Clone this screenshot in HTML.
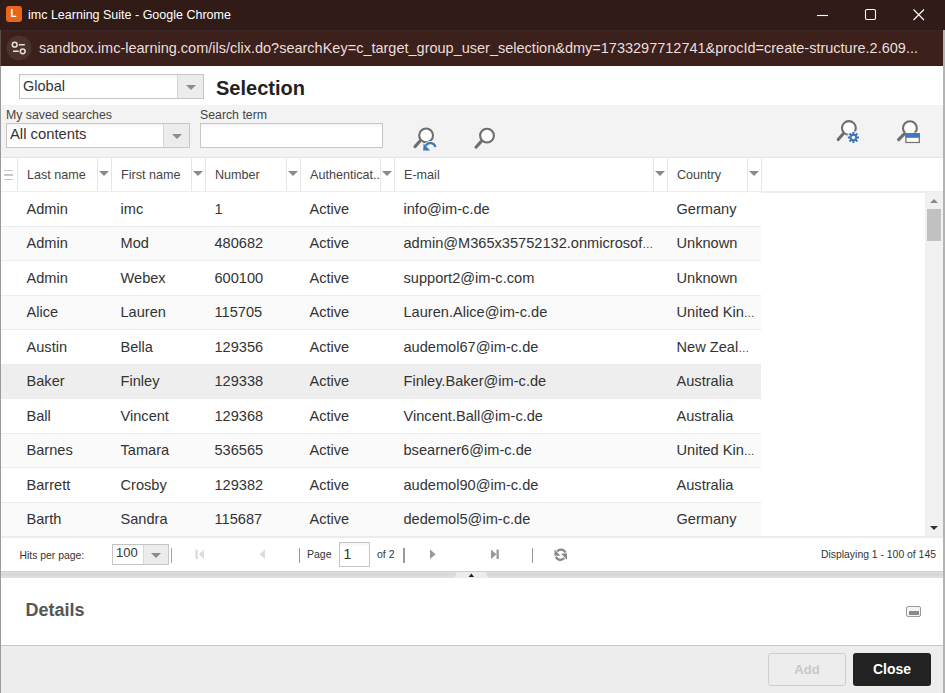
<!DOCTYPE html>
<html><head><meta charset="utf-8">
<style>
*{box-sizing:border-box;margin:0;padding:0}
html,body{width:945px;height:693px;overflow:hidden;background:#fff;font-family:"Liberation Sans",sans-serif;color:#333}
.a{position:absolute}
#title{left:0;top:0;width:945px;height:30px;background:#311b17}
#addr{left:0;top:30px;width:945px;height:36px;background:#3b201c;border-top:1.5px solid #3b2727}
#logo{left:5.5px;top:5.5px;width:16px;height:16px;border-radius:3px;background:#e8651c;color:#fff;font:bold 10px/16px "Liberation Sans",sans-serif;text-align:center}
#ttxt{left:28px;top:7px;font-size:12.5px;line-height:16px;color:#fff;white-space:nowrap}
#url{left:39px;top:39px;font-size:14.5px;line-height:18px;color:#e9dfdc;white-space:nowrap}
.t{white-space:nowrap;position:absolute}
.combo{position:absolute;border:1px solid #c6c6c6;background:linear-gradient(#f3f3f3,#fff 4px)}
.trig{position:absolute;top:0;bottom:0;right:0;border-left:1px solid #d6d6d6;background:#ececec}
.trig:after{content:"";position:absolute;left:50%;top:50%;margin-left:-5px;margin-top:-2px;border-left:5px solid transparent;border-right:5px solid transparent;border-top:5px solid #8c8c8c}
#band{left:1px;top:105px;width:942px;height:52px;background:#f3f3f3}
#hdr{left:1px;top:157px;width:942px;height:35px;background:#fff;border-top:1px solid #e4e4e4}
.hsep{position:absolute;top:158px;height:33px;width:1px;background:#e6e6e6}
.harr{position:absolute;top:171px;width:0;height:0;border-left:5px solid transparent;border-right:5px solid transparent;border-top:5px solid #8a8a8a}
.ht{position:absolute;top:166.5px;font-size:12.6px;line-height:16px;color:#444;white-space:nowrap}
.row{position:absolute;left:1px;width:760px;height:34.5px;border-bottom:1px solid #ececec}
.rt{position:absolute;font-size:14.6px;line-height:18px;color:#333;white-space:nowrap}

</style></head><body>
<div id="title" class="a"></div>
<div id="logo" class="a">L</div>
<div id="ttxt" class="a">imc Learning Suite - Google Chrome</div>
<div id="addr" class="a"></div>
<svg class="a" style="left:0;top:0" width="945" height="66" viewBox="0 0 945 66">
<path d="M817 15.5H828" stroke="#fff" stroke-width="1.1"/>
<rect x="865.5" y="9.5" width="10" height="10" rx="1.5" fill="none" stroke="#fff" stroke-width="1.1"/>
<path d="M913.5 9.5L924 20M924 9.5L913.5 20" stroke="#fff" stroke-width="1.1"/>
<circle cx="19" cy="48" r="12.5" fill="#4b322d"/>
<circle cx="14.7" cy="44.7" r="2.4" fill="none" stroke="#e9dfdc" stroke-width="1.5"/>
<path d="M18.8 44.7H24.8M13 51.3H18.7" stroke="#e9dfdc" stroke-width="1.5"/>
<circle cx="22.7" cy="51.3" r="2.4" fill="none" stroke="#e9dfdc" stroke-width="1.5"/>
</svg>
<div id="url" class="a">sandbox.imc-learning.com/ils/clix.do?searchKey=c_target_group_user_selection&amp;dmy=1733297712741&amp;procId=create-structure.2.609...</div>
<div class="a" style="left:0;top:30px;width:1px;height:36px;background:#5e4c48"></div><div class="a" style="left:0;top:66px;width:1.3px;height:627px;background:#9b9b9b"></div>
<div class="a" style="left:943px;top:30px;width:2px;height:663px;background:#b3b3b3"></div>
<div class="combo" style="left:19px;top:74px;width:185px;height:25px"><div class="trig" style="width:26px"></div></div>
<div class="t" style="left:23px;top:78px;font-size:14.5px;line-height:17px;color:#333">Global</div>
<div class="t" style="left:216px;top:76px;font-size:20px;line-height:24px;font-weight:bold;color:#222">Selection</div>
<div id="band" class="a"></div>
<div class="t" style="left:6px;top:108px;font-size:12.3px;line-height:15px;color:#444">My saved searches</div>
<div class="t" style="left:200px;top:108px;font-size:12.3px;line-height:15px;color:#444">Search term</div>
<div class="combo" style="left:6px;top:123px;width:184px;height:25px"><div class="trig" style="width:26px"></div></div>
<div class="t" style="left:10px;top:126px;font-size:14.8px;line-height:17px;color:#333">All contents</div>
<div class="combo" style="left:200px;top:123px;width:183px;height:25px"></div>
<svg class="a" style="left:0;top:105px" width="945" height="52" viewBox="0 105 945 52">
<g fill="#fff" stroke="#6e6e6e" stroke-width="2.1">
<circle cx="426.1" cy="135.4" r="6.9"/>
<circle cx="487" cy="135.6" r="6.9"/>
<circle cx="848.9" cy="128" r="6.9"/>
<circle cx="909.9" cy="128.2" r="6.9"/>
</g>
<g stroke="#6e6e6e" stroke-width="3.1" stroke-linecap="round">
<path d="M420 141L415 146.6"/>
<path d="M481 141.6L476 147.2"/>
<path d="M843 134L838.2 139.6"/>
<path d="M903.8 134.3L898.6 139.6"/>
</g>
<path d="M435.3 147.2A5 4.6 0 0 0 425.8 145.8" fill="none" stroke="#fff" stroke-width="4" opacity=".8"/><path d="M435.3 147.2A5 4.6 0 0 0 425.8 145.8" fill="none" stroke="#3d76bb" stroke-width="2.2"/>
<polygon points="423.2,150.6 423.6,143.6 430.2,150.4" fill="#3d76bb"/>
<g transform="translate(853.4 137.5)">
<circle r="6.4" fill="#fff" opacity=".85"/>
<g fill="#3d76bb">
<circle r="3.7"/>
<rect x="-1.05" y="-5.6" width="2.1" height="11.2"/>
<rect x="-1.05" y="-5.6" width="2.1" height="11.2" transform="rotate(45)"/>
<rect x="-1.05" y="-5.6" width="2.1" height="11.2" transform="rotate(90)"/>
<rect x="-1.05" y="-5.6" width="2.1" height="11.2" transform="rotate(135)"/>
</g>
<circle r="1.8" fill="#fff"/>
</g>
<rect x="905.2" y="132.5" width="14.8" height="11.2" fill="#fff" opacity=".85"/>
<rect x="905.9" y="133.7" width="13.4" height="8.8" fill="#fff" stroke="#777" stroke-width="1.3"/>
<rect x="905.3" y="133.2" width="14.6" height="4.6" fill="#4078bd"/>
</svg>
<div id="hdr" class="a"></div>
<div class="a" style="left:1px;top:191px;width:942px;height:2px;background:#ececec"></div>

<div class="hsep" style="left:17px"></div>
<div class="ht" style="left:27px">Last name</div>
<div class="hsep" style="left:97px"></div>
<div class="hsep" style="left:111px"></div>
<div class="harr" style="left:99px"></div>
<div class="ht" style="left:121px">First name</div>
<div class="hsep" style="left:191px"></div>
<div class="hsep" style="left:205px"></div>
<div class="harr" style="left:193px"></div>
<div class="ht" style="left:215px">Number</div>
<div class="hsep" style="left:286px"></div>
<div class="hsep" style="left:300px"></div>
<div class="harr" style="left:288px"></div>
<div class="ht" style="left:310px">Authenticat..</div>
<div class="hsep" style="left:380px"></div>
<div class="hsep" style="left:394px"></div>
<div class="harr" style="left:382px"></div>
<div class="ht" style="left:404px">E-mail</div>
<div class="hsep" style="left:653px"></div>
<div class="hsep" style="left:667px"></div>
<div class="harr" style="left:655px"></div>
<div class="ht" style="left:677px">Country</div>
<div class="hsep" style="left:747px"></div>
<div class="hsep" style="left:761px"></div>
<div class="harr" style="left:749px"></div>
<div class="a" style="left:4.3px;top:169.5px;width:8.5px;height:1.8px;background:#c8c8c8"></div>
<div class="a" style="left:4.3px;top:174px;width:8.5px;height:1.8px;background:#c8c8c8"></div>
<div class="a" style="left:4.3px;top:178.5px;width:8.5px;height:1.8px;background:#c8c8c8"></div>
<div class="row" style="top:192.0px;background:#fff"></div>
<div class="rt" style="left:26.5px;top:199.5px">Admin</div>
<div class="rt" style="left:120.5px;top:199.5px">imc</div>
<div class="rt" style="left:214.5px;top:199.5px">1</div>
<div class="rt" style="left:309.5px;top:199.5px">Active</div>
<div class="rt" style="left:403.5px;top:199.5px">info@im-c.de</div>
<div class="rt" style="left:676.5px;top:199.5px">Germany</div>
<div class="row" style="top:226.5px;background:#fafafa"></div>
<div class="rt" style="left:26.5px;top:234.0px">Admin</div>
<div class="rt" style="left:120.5px;top:234.0px">Mod</div>
<div class="rt" style="left:214.5px;top:234.0px">480682</div>
<div class="rt" style="left:309.5px;top:234.0px">Active</div>
<div class="rt" style="left:403.5px;top:234.0px">admin@M365x35752132.onmicrosof<span style="font-size:11px">…</span></div>
<div class="rt" style="left:676.5px;top:234.0px">Unknown</div>
<div class="row" style="top:261.0px;background:#fff"></div>
<div class="rt" style="left:26.5px;top:268.5px">Admin</div>
<div class="rt" style="left:120.5px;top:268.5px">Webex</div>
<div class="rt" style="left:214.5px;top:268.5px">600100</div>
<div class="rt" style="left:309.5px;top:268.5px">Active</div>
<div class="rt" style="left:403.5px;top:268.5px">support2@im-c.com</div>
<div class="rt" style="left:676.5px;top:268.5px">Unknown</div>
<div class="row" style="top:295.5px;background:#fafafa"></div>
<div class="rt" style="left:26.5px;top:303.0px">Alice</div>
<div class="rt" style="left:120.5px;top:303.0px">Lauren</div>
<div class="rt" style="left:214.5px;top:303.0px">115705</div>
<div class="rt" style="left:309.5px;top:303.0px">Active</div>
<div class="rt" style="left:403.5px;top:303.0px">Lauren.Alice@im-c.de</div>
<div class="rt" style="left:676.5px;top:303.0px">United Kin<span style="font-size:11px">…</span></div>
<div class="row" style="top:330.0px;background:#fff"></div>
<div class="rt" style="left:26.5px;top:337.5px">Austin</div>
<div class="rt" style="left:120.5px;top:337.5px">Bella</div>
<div class="rt" style="left:214.5px;top:337.5px">129356</div>
<div class="rt" style="left:309.5px;top:337.5px">Active</div>
<div class="rt" style="left:403.5px;top:337.5px">audemol67@im-c.de</div>
<div class="rt" style="left:676.5px;top:337.5px">New Zeal<span style="font-size:11px">…</span></div>
<div class="row" style="top:364.5px;background:#eeeeee"></div>
<div class="rt" style="left:26.5px;top:372.0px">Baker</div>
<div class="rt" style="left:120.5px;top:372.0px">Finley</div>
<div class="rt" style="left:214.5px;top:372.0px">129338</div>
<div class="rt" style="left:309.5px;top:372.0px">Active</div>
<div class="rt" style="left:403.5px;top:372.0px">Finley.Baker@im-c.de</div>
<div class="rt" style="left:676.5px;top:372.0px">Australia</div>
<div class="row" style="top:399.0px;background:#fff"></div>
<div class="rt" style="left:26.5px;top:406.5px">Ball</div>
<div class="rt" style="left:120.5px;top:406.5px">Vincent</div>
<div class="rt" style="left:214.5px;top:406.5px">129368</div>
<div class="rt" style="left:309.5px;top:406.5px">Active</div>
<div class="rt" style="left:403.5px;top:406.5px">Vincent.Ball@im-c.de</div>
<div class="rt" style="left:676.5px;top:406.5px">Australia</div>
<div class="row" style="top:433.5px;background:#fafafa"></div>
<div class="rt" style="left:26.5px;top:441.0px">Barnes</div>
<div class="rt" style="left:120.5px;top:441.0px">Tamara</div>
<div class="rt" style="left:214.5px;top:441.0px">536565</div>
<div class="rt" style="left:309.5px;top:441.0px">Active</div>
<div class="rt" style="left:403.5px;top:441.0px">bsearner6@im-c.de</div>
<div class="rt" style="left:676.5px;top:441.0px">United Kin<span style="font-size:11px">…</span></div>
<div class="row" style="top:468.0px;background:#fff"></div>
<div class="rt" style="left:26.5px;top:475.5px">Barrett</div>
<div class="rt" style="left:120.5px;top:475.5px">Crosby</div>
<div class="rt" style="left:214.5px;top:475.5px">129382</div>
<div class="rt" style="left:309.5px;top:475.5px">Active</div>
<div class="rt" style="left:403.5px;top:475.5px">audemol90@im-c.de</div>
<div class="rt" style="left:676.5px;top:475.5px">Australia</div>
<div class="row" style="top:502.5px;background:#fafafa"></div>
<div class="rt" style="left:26.5px;top:510.0px">Barth</div>
<div class="rt" style="left:120.5px;top:510.0px">Sandra</div>
<div class="rt" style="left:214.5px;top:510.0px">115687</div>
<div class="rt" style="left:309.5px;top:510.0px">Active</div>
<div class="rt" style="left:403.5px;top:510.0px">dedemol5@im-c.de</div>
<div class="rt" style="left:676.5px;top:510.0px">Germany</div>
<!-- scrollbar -->
<div class="a" style="left:925px;top:192px;width:18px;height:345px;background:#f1f1f1"></div>
<div class="a" style="left:927px;top:209px;width:14px;height:32px;background:#c1c1c1"></div>
<div class="a" style="left:930px;top:198.5px;width:0;height:0;border-left:4px solid transparent;border-right:4px solid transparent;border-bottom:4.5px solid #8a8a8a"></div>
<div class="a" style="left:930px;top:526px;width:0;height:0;border-left:4px solid transparent;border-right:4px solid transparent;border-top:4.5px solid #333"></div>
<!-- toolbar -->
<div class="a" style="left:1px;top:536px;width:942px;height:2px;background:#ececec"></div>
<div class="t" style="left:19.5px;top:549px;font-size:10.4px;line-height:13px;color:#333">Hits per page:</div>
<div class="combo" style="left:112px;top:544px;width:57px;height:21px"><div class="trig" style="width:25px"></div></div>
<div class="t" style="left:116px;top:545.2px;font-size:13px;line-height:15px;color:#333">100</div>
<div class="a" style="left:170.5px;top:548px;width:1.5px;height:15px;background:#a5a5a5"></div>
<div class="a" style="left:299px;top:547.5px;width:1.4px;height:15px;background:#999"></div>
<div class="t" style="left:307px;top:548px;font-size:10.5px;line-height:13px;color:#333">Page</div>
<div class="combo" style="left:339px;top:542px;width:31px;height:25px"></div>
<div class="t" style="left:343.5px;top:546px;font-size:14px;line-height:16px;color:#333">1</div>
<div class="t" style="left:377px;top:548px;font-size:10.5px;line-height:13px;color:#333">of 2</div>
<div class="a" style="left:403.2px;top:547.5px;width:1.4px;height:15px;background:#999"></div>
<div class="a" style="left:531.5px;top:547.5px;width:1.4px;height:15px;background:#999"></div>
<div class="t" style="left:821px;top:548px;font-size:10.4px;line-height:13px;color:#333">Displaying 1 - 100 of 145</div>
<svg class="a" style="left:0;top:540px" width="945" height="40" viewBox="0 540 945 40">
<g fill="#dcdcdc">
<rect x="195.5" y="549.5" width="2.3" height="9.5"/>
<polygon points="198.9,554.25 204,549.5 204,559"/>
<polygon points="259.4,554.25 265,549.5 265,559"/>
</g>
<g fill="#999">
<polygon points="435.7,554.3 430,549.6 430,559"/>
<polygon points="496.5,554.3 491,549.6 491,559"/>
<rect x="496.5" y="549.6" width="2.3" height="9.4"/>
</g>
<g fill="#888">
<path d="M565.6 552.6A5 5 0 0 0 557.2 551.4" fill="none" stroke="#888" stroke-width="2.3"/>
<polygon points="554.5,549.6 554.5,555.7 560.4,555.7"/>
<path d="M555.8 556.8A5 5 0 0 0 564.2 558.1" fill="none" stroke="#888" stroke-width="2.3"/>
<polygon points="567,553.5 567,559.8 561,553.5"/>
</g>
</svg>
<!-- splitter -->
<div class="a" style="left:1px;top:571px;width:942px;height:7px;background:linear-gradient(#cfcfcf 0,#cfcfcf 1px,#e0e0e0 1px,#e0e0e0 2px,#d6d6d6 2px,#dadada 5px,#e4e4e4 7px)"></div>
<svg class="a" style="left:0;top:570px" width="945" height="10" viewBox="0 570 945 10">
<polygon points="456.9,572 485.7,572 488.1,578 454.6,578" fill="#ececec"/>
<polygon points="471.35,573.4 474.1,577 468.6,577" fill="#222"/>
</svg>
<!-- details -->
<div class="t" style="left:25.5px;top:599px;font-size:18px;line-height:22px;font-weight:bold;color:#555">Details</div>
<div class="a" style="left:906px;top:606px;width:15px;height:11px;border:1px solid #9a9a9a;border-radius:2px;background:#f4f4f4"></div>
<div class="a" style="left:908.5px;top:611px;width:10px;height:3.5px;background:#8a8a8a"></div>
<!-- footer -->
<div class="a" style="left:1px;top:645px;width:942px;height:48px;background:#ededed;border-top:1px solid #c8c8c8"></div>
<div class="a" style="left:768px;top:653px;width:78px;height:33px;border:1px solid #cfcfcf;border-radius:3px;background:#ededed"></div>
<div class="t" style="left:768px;top:653px;width:78px;line-height:33px;text-align:center;font-size:13px;font-weight:bold;color:#c8c8c8">Add</div>
<div class="a" style="left:853px;top:653px;width:78px;height:33px;border-radius:3px;background:#222"></div>
<div class="t" style="left:853px;top:653px;width:78px;line-height:33px;text-align:center;font-size:14px;font-weight:bold;color:#fff">Close</div>

</body></html>
